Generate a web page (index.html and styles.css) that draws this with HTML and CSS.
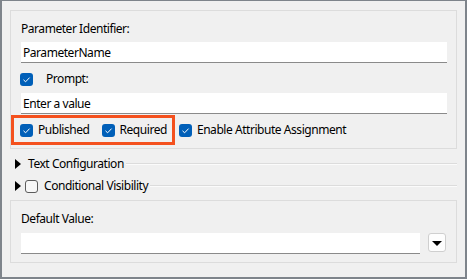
FILE: index.html
```html
<!DOCTYPE html>
<html>
<head>
<meta charset="utf-8">
<link rel="stylesheet" href="styles.css">
</head>
<body>
<div class="window">
  <div class="group group-main">
    <div class="label">Parameter Identifier:</div>
    <div class="input first">ParameterName</div>
    <div class="row prompt-row">
      <span class="cb checked"><svg width="13" height="13" viewBox="0 0 13 13"><rect x="0" y="0" width="13" height="13" rx="3" fill="#005fb8"/><path d="M3.5 6.8 L5.6 8.8 L9.6 4.6" fill="none" stroke="#fff" stroke-width="1"/></svg></span>
      <span class="prompt-text">Prompt:</span>
    </div>
    <div class="input second">Enter a value</div>
    <div class="row checks-row">
      <span class="cb checked"><svg width="13" height="13" viewBox="0 0 13 13"><rect x="0" y="0" width="13" height="13" rx="3" fill="#005fb8"/><path d="M3.5 6.8 L5.6 8.8 L9.6 4.6" fill="none" stroke="#fff" stroke-width="1"/></svg></span>
      <span class="cb-text">Published</span>
      <span class="cb checked gap"><svg width="13" height="13" viewBox="0 0 13 13"><rect x="0" y="0" width="13" height="13" rx="3" fill="#005fb8"/><path d="M3.5 6.8 L5.6 8.8 L9.6 4.6" fill="none" stroke="#fff" stroke-width="1"/></svg></span>
      <span class="cb-text">Required</span>
      <span class="cb checked gap"><svg width="13" height="13" viewBox="0 0 13 13"><rect x="0" y="0" width="13" height="13" rx="3" fill="#005fb8"/><path d="M3.5 6.8 L5.6 8.8 L9.6 4.6" fill="none" stroke="#fff" stroke-width="1"/></svg></span>
      <span class="cb-text">Enable Attribute Assignment</span>
    </div>
    <div class="highlight"></div>
  </div>

  <div class="section text-config">
    <span class="tri"></span>
    <span class="section-text">Text Configuration</span>
    <span class="rule"></span>
  </div>
  <div class="section cond-vis">
    <span class="tri"></span>
    <span class="cb unchecked"></span>
    <span class="section-text">Conditional Visibility</span>
    <span class="rule"></span>
  </div>

  <div class="group group-default">
    <div class="label">Default Value:</div>
    <div class="default-row">
      <div class="input wide"></div>
      <div class="dropdown"><span class="down"></span></div>
    </div>
  </div>
</div>
</body>
</html>
```
FILE: styles.css
```css
* { box-sizing: border-box; }
html, body { margin: 0; padding: 0; }
body {
  background: #f0f0f0;
  font-family: "Noto Sans", "Open Sans", sans-serif;
  font-size: 12px;
  letter-spacing: -0.45px;
  color: #000;
}
.window {
  width: 467px;
  height: 279px;
  background: #f0f0f0;
  border-style: solid;
  border-color: #7e848b;
  border-width: 1px 2px 2px 2px;
  padding: 9px 8px 0 8px;
  display: flex;
  flex-direction: column;
}
.group {
  border: 1px solid #dcdcdc;
  display: flex;
  flex-direction: column;
}
.group-main {
  position: relative;
  padding: 9px 9px 11px 10px;
}
.label {
  line-height: 18px;
  height: 16px;
  white-space: nowrap;
}
.input {
  height: 21px;
  background: #fff;
  border-bottom: 1px solid #8a8a8a;
  line-height: 21px;
  padding-left: 2px;
  white-space: nowrap;
  overflow: hidden;
}
.input.first { margin-top: 6px; }
.input.second { margin-top: 7px; }
.row {
  display: flex;
  align-items: center;
  height: 14px;
  line-height: 14px;
  white-space: nowrap;
}
.prompt-row { margin-top: 9px; margin-left: -1px; }
.checks-row { margin-top: 9px; margin-left: -1px; }
.cb {
  width: 13px;
  height: 13px;
  flex: 0 0 13px;
  display: block;
}
.cb svg { display: block; }
.prompt-text { margin-left: 13px; }
.cb-text { margin-left: 5px; }
.cb.gap { margin-left: 12px; }
.cb.unchecked {
  border: 1px solid #5c5c5c;
  border-radius: 3px;
  background: #f7f7f7;
}
.highlight {
  position: absolute;
  left: 0px;
  top: 104px;
  width: 164px;
  height: 30px;
  border: 3px solid #f4511e;
}
.section {
  display: flex;
  align-items: center;
  height: 16px;
  line-height: 16px;
  white-space: nowrap;
  padding-left: 5px;
}
.text-config { margin-top: 7px; }
.cond-vis { margin-top: 6px; }
.tri {
  width: 0;
  height: 0;
  border-left: 6px solid #000;
  border-top: 5px solid transparent;
  border-bottom: 5px solid transparent;
  flex: 0 0 auto;
}
.text-config .section-text { margin-left: 7px; }
.cond-vis .cb { margin-left: 4px; }
.cond-vis .section-text { margin-left: 6px; }
.rule {
  flex: 1;
  height: 2px;
  border-top: 1px solid #dcdcdc;
  border-bottom: 1px solid #fbfbfb;
  margin-left: 2px;
}
.group-default {
  margin-top: 6px;
  padding: 9px 10px 8px 10px;
}
.default-row {
  display: flex;
  align-items: flex-start;
  gap: 8px;
  margin-top: 7px;
}
.input.wide { flex: 1; }
.dropdown {
  width: 18px;
  height: 19px;
  margin-top: 0px;
  border: 1px solid #cfcfcf;
  border-radius: 3px;
  background: #fdfdfd;
  display: flex;
  align-items: center;
  justify-content: center;
}
.down {
  width: 0;
  height: 0;
  border-top: 5px solid #000;
  border-left: 5px solid transparent;
  border-right: 5px solid transparent;
  margin-top: 1px;
}
```
